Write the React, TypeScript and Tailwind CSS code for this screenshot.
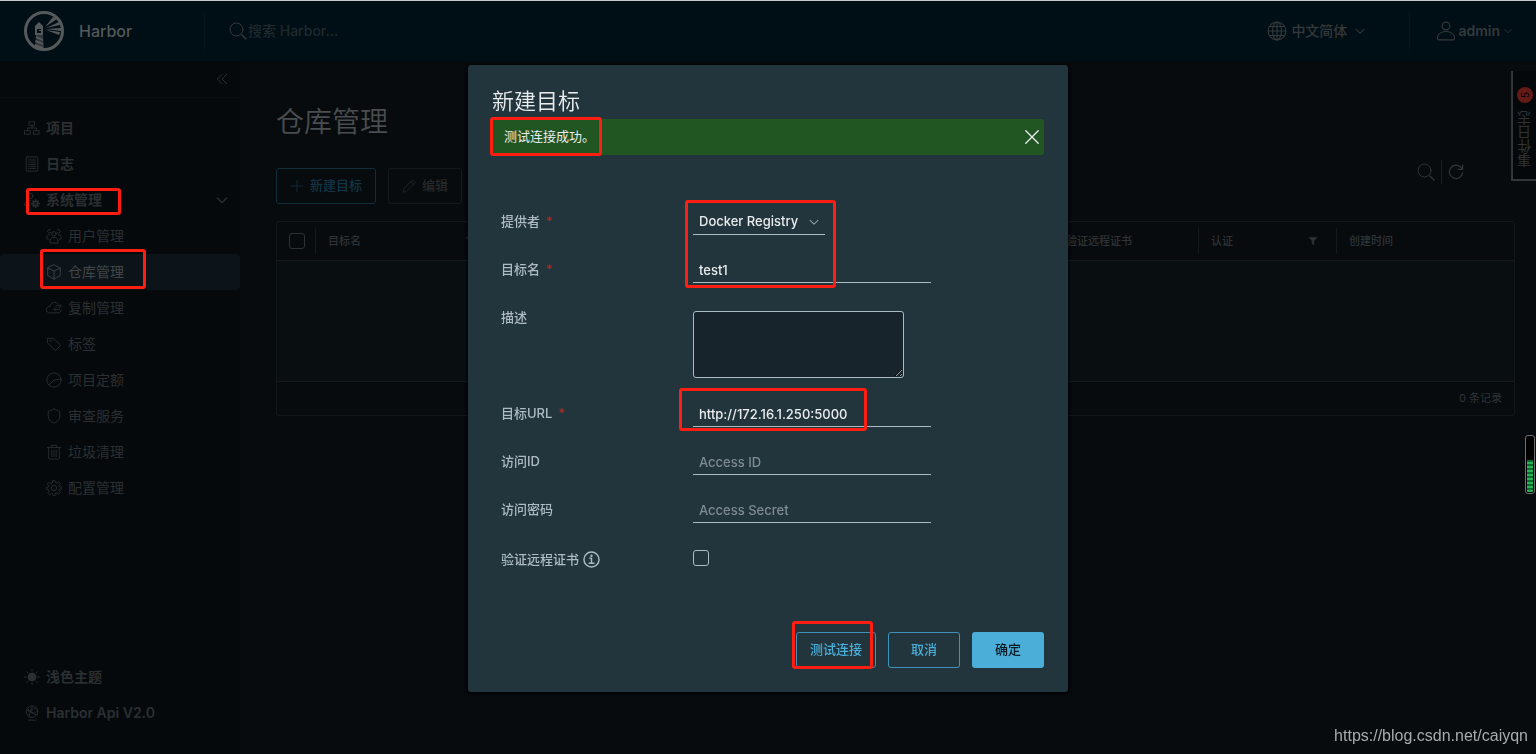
import React from "react";

type IconProps = { className?: string };

function Svg({ className, children }: IconProps & { children: React.ReactNode }) {
  return (
    <svg
      viewBox="0 0 36 36"
      className={className}
      fill="none"
      stroke="currentColor"
      strokeWidth={2}
      strokeLinecap="round"
      strokeLinejoin="round"
      aria-hidden="true"
    >
      {children}
    </svg>
  );
}

const OrganizationIcon = (p: IconProps) => (
  <Svg {...p}>
    <rect x="12" y="4" width="12" height="8" />
    <rect x="2" y="24" width="12" height="8" />
    <rect x="22" y="24" width="12" height="8" />
    <path d="M18 12v6M8 24v-6h20v6" />
  </Svg>
);
const LogIcon = (p: IconProps) => (
  <Svg {...p}>
    <rect x="5" y="2" width="26" height="32" rx="2" />
    <path d="M10 9h2M15 9h11M10 14h2M15 14h11M10 19h2M15 19h11M10 24h2M15 24h11M10 28h2M15 28h11" />
  </Svg>
);
const AdminIcon = (p: IconProps) => (
  <Svg {...p}>
    <circle cx="14" cy="9" r="6" />
    <path d="M14 19c-6 0-11 3-12 6v6h12" />
    <circle cx="26" cy="26" r="5" strokeWidth={4} />
    <path
      d="M26 17v3M26 32v3M17 26h3M32 26h3M20 20l2 2M30 30l2 2M20 32l2-2M30 22l2-2"
      strokeWidth={3}
    />
  </Svg>
);
const UsersIcon = (p: IconProps) => (
  <Svg {...p}>
    <circle cx="18" cy="13" r="5" />
    <path d="M9 33v-6c2-4 5-6 9-6s7 2 9 6v6z" />
    <path d="M11 10a4 4 0 1 1-1-6M25 10a4 4 0 1 0 1-6" />
    <path d="M8 15c-3 0-5 2-6 4v6h4M28 15c3 0 5 2 6 4v6h-4" />
  </Svg>
);
const BoxIcon = (p: IconProps) => (
  <Svg {...p}>
    <path d="M18 2 32 9v17l-14 8L4 26V9zM4 9l14 7 14-7M18 16v18" />
  </Svg>
);
const ReplicationIcon = (p: IconProps) => (
  <Svg {...p}>
    <path d="M26 8C23 4 17 4 13 7c-2 2-3 4-3 7-5 0-9 3-9 8 0 4 3 7 7 7h19c4 0 7-3 7-6" />
    <path d="M22 13h12M30 9l4 4-4 4M31 21H18M22 17l-4 4 4 4" />
  </Svg>
);
const TagIcon = (p: IconProps) => (
  <Svg {...p}>
    <path d="M4 5h13l16 16-12 12L4 16z" />
    <circle cx="10" cy="11" r="1" />
  </Svg>
);
const QuotaIcon = (p: IconProps) => (
  <Svg {...p}>
    <circle cx="18" cy="18" r="16" />
    <path d="M33 16 18 18 7 29" />
  </Svg>
);
const ShieldIcon = (p: IconProps) => (
  <Svg {...p}>
    <path d="M18 2c5 3 9 4 13 5v11c0 8-6 13-13 16C11 31 5 26 5 18V7c4-1 8-2 13-5z" />
  </Svg>
);
const TrashIcon = (p: IconProps) => (
  <Svg {...p}>
    <path d="M3 8h30M6 8v24c0 1 1 2 2 2h20c1 0 2-1 2-2V8M12 8V3h12v5M13 14v14M18 14v14M23 14v14" />
  </Svg>
);
const CogIcon = (p: IconProps) => (
  <Svg {...p}>
    <circle cx="18" cy="18" r="6" />
    <path d="m15 2-1 5-3 1-4-3-4 4 3 4-1 3-4 1v4l5 1 1 3-3 4 4 4 4-3 3 1 1 4h4l1-5 3-1 4 3 4-4-3-4 1-3 5-1v-4l-5-1-1-3 3-4-4-4-4 3-3-1-1-4z" />
  </Svg>
);
const SunIcon = (p: IconProps) => (
  <Svg {...p}>
    <circle cx="18" cy="18" r="9" fill="currentColor" />
    <path d="M18 1v4M18 31v4M1 18h4M31 18h4M6 6l3 3M27 27l3 3M6 30l3-3M27 9l3-3" />
  </Svg>
);
const ApiIcon = (p: IconProps) => (
  <Svg {...p}>
    <circle cx="18" cy="15" r="13" />
    <path d="M8 7c3 8 12 14 22 15M27 6c-8 2-14 9-16 19M6 12l8 2 5-11M14 14l9 5 6-6M10 34h17" />
  </Svg>
);
const SearchIcon = (p: IconProps) => (
  <Svg {...p}>
    <circle cx="15" cy="15" r="13" />
    <path d="m26 26 8 8" strokeWidth={3} />
  </Svg>
);
const GlobeIcon = (p: IconProps) => (
  <Svg {...p}>
    <circle cx="18" cy="18" r="16" />
    <ellipse cx="18" cy="18" rx="8" ry="16" />
    <path d="M18 2v32M2 18h32M5 10h26M5 26h26" />
  </Svg>
);
const UserIcon = (p: IconProps) => (
  <Svg {...p}>
    <circle cx="18" cy="9" r="7" />
    <path d="M3 33v-6c3-5 8-8 15-8s12 3 15 8v6c0 1-1 1-2 1H5c-1 0-2 0-2-1z" />
  </Svg>
);
const ChevronIcon = (p: IconProps) => (
  <Svg {...p}>
    <path d="m4 12 14 14 14-14" strokeWidth={4} />
  </Svg>
);
const CollapseIcon = (p: IconProps) => (
  <Svg {...p}>
    <path d="M18 4 4 18l14 14M32 4 18 18l14 14" strokeWidth={3} />
  </Svg>
);
const PlusIcon = (p: IconProps) => (
  <Svg {...p}>
    <path d="M18 3v30M3 18h30" />
  </Svg>
);
const PencilIcon = (p: IconProps) => (
  <Svg {...p}>
    <path d="M3 33l2-9L26 3c1-1 2-1 3 0l4 4c1 1 1 2 0 3L12 31zM22 7l7 7" />
  </Svg>
);
const RefreshIcon = (p: IconProps) => (
  <Svg {...p}>
    <path d="M31 10A15 15 0 1 0 33 20M33 2v10H23" strokeWidth={3} />
  </Svg>
);
const FilterIcon = (p: IconProps) => (
  <Svg {...p}>
    <path d="M4 5h28L21 18v14l-6-3V18z" fill="currentColor" />
  </Svg>
);
const CloseIcon = (p: IconProps) => (
  <Svg {...p}>
    <path d="m4 4 28 28M32 4 4 32" strokeWidth={3} />
  </Svg>
);
const InfoIcon = (p: IconProps) => (
  <Svg {...p}>
    <circle cx="18" cy="18" r="16" strokeWidth={3} />
    <circle cx="18" cy="10" r="1" strokeWidth={3} />
    <path d="M14 15h4v11M13 26h10" strokeWidth={3} />
  </Svg>
);

function HarborLogo({ className }: IconProps) {
  return (
    <svg viewBox="0 0 40 40" className={className} aria-hidden="true">
      <circle cx="20" cy="20" r="18.5" fill="none" stroke="currentColor" strokeWidth="3" />
      <g fill="currentColor">
        <path d="M11 15l4-4 4 4v2h-8z" />
        <path fillRule="evenodd" d="M11 16h8v8h-8zM13 18v4h4v-2h-2v-1h2v-1z" />
        <path d="M12 25l7 3v2l-7-3zM12 29l7 3v2l-8-3zM11 33l8 3v3l-8-3z" />
        <path d="M12 24h7v1l1 13-9-2z" fillOpacity="0.55" />
        <path d="M21 16 29 6l4 2zM22 17l13-6 1 3zM22 18l15-1v3zM22 19l14 2-1 3z" />
      </g>
    </svg>
  );
}

function Mark({ className }: { className: string }) {
  return (
    <span
      aria-hidden="true"
      className={`pointer-events-none absolute rounded-[3px] border-3 border-[#ff1e12] ${className}`}
    />
  );
}

const topNav = [
  { label: "项目", Icon: OrganizationIcon },
  { label: "日志", Icon: LogIcon },
];

const systemNav = [
  { label: "用户管理", Icon: UsersIcon },
  { label: "仓库管理", Icon: BoxIcon, active: true },
  { label: "复制管理", Icon: ReplicationIcon },
  { label: "标签", Icon: TagIcon },
  { label: "项目定额", Icon: QuotaIcon },
  { label: "审查服务", Icon: ShieldIcon },
  { label: "垃圾清理", Icon: TrashIcon },
  { label: "配置管理", Icon: CogIcon },
];

function Header() {
  return (
    <header className="flex h-[61px] shrink-0 items-center border-t border-[#c5c9cb] bg-[#000e15] text-[#34393c]">
      <a href="#home" className="flex h-10 w-[205px] items-center gap-[15px] border-r border-[#06151c] pl-6">
        <HarborLogo className="size-10 text-[#55595b]" />
        <span className="text-base font-medium text-[#55595b]">Harbor</span>
      </a>
      <label className="flex flex-1 items-center gap-px pl-6">
        <SearchIcon className="size-[18px]" />
        <input
          type="search"
          aria-label="搜索"
          placeholder="搜索 Harbor..."
          className="w-60 bg-transparent text-sm font-medium outline-none placeholder:text-[#20292e]"
        />
      </label>
      <button type="button" className="flex h-10 items-center border-r border-[#06151c] pr-11 text-sm font-medium">
        <GlobeIcon className="mr-1 size-5" />
        中文简体
        <ChevronIcon className="ml-2 size-[10px]" />
      </button>
      <button type="button" className="flex items-center pr-6 pl-[26px] text-sm font-semibold">
        <UserIcon className="mr-[2px] size-5" />
        admin
        <ChevronIcon className="ml-1 size-2" />
      </button>
    </header>
  );
}

function Sidebar() {
  return (
    <nav className="flex w-60 shrink-0 flex-col bg-[#05090c] pb-[23px] text-sm text-[#2b2f31]">
      <div className="mb-3 flex h-[37px] items-center justify-end border-b border-[#090d10] pr-3">
        <button type="button" aria-label="收起">
          <CollapseIcon className="size-3" />
        </button>
      </div>
      {topNav.map(({ label, Icon }) => (
        <a key={label} href="#nav" className="flex h-9 items-center gap-[6px] pl-6 font-bold">
          <Icon className="size-4" />
          {label}
        </a>
      ))}
      <button type="button" className="relative flex h-9 items-center gap-[6px] pr-3 pl-6 font-bold">
        <AdminIcon className="size-4" />
        系统管理
        <ChevronIcon className="ml-auto size-3" />
        <Mark className="top-[6px] left-[26px] h-[27px] w-[95px]" />
      </button>
      {systemNav.map(({ label, Icon, active }) => (
        <a
          key={label}
          href="#nav"
          className={
            active
              ? "relative flex h-9 items-center gap-[6px] rounded-[4px] bg-[#0c1319] pl-[46px] text-[#424648]"
              : "flex h-9 items-center gap-[6px] pl-[46px]"
          }
        >
          <Icon className="size-4" />
          {label}
          {active && <Mark className="-top-[5px] left-10 h-10 w-[106px]" />}
        </a>
      ))}
      <div className="mt-auto font-semibold">
        <button type="button" className="flex h-9 w-full items-center gap-[6px] pl-6 font-bold">
          <SunIcon className="size-4" />
          浅色主题
        </button>
        <a href="#api" className="flex h-9 items-center gap-[6px] pl-6">
          <ApiIcon className="size-4" />
          Harbor Api V2.0
        </a>
      </div>
    </nav>
  );
}

function HeadCell({ children, filter }: { children?: React.ReactNode; filter?: boolean }) {
  return (
    <th className="h-[38px] p-0 text-left font-medium">
      <div className="flex h-[26px] items-center justify-between border-l border-[#14191c] pr-[18px] pl-3 whitespace-nowrap">
        {children}
        {filter && <FilterIcon className="size-[10px]" />}
      </div>
    </th>
  );
}

function Main() {
  return (
    <main className="flex-1 bg-[#070b0e] pt-[41px] pr-[21px] pl-9 text-[#2f3335]">
      <h1 className="text-[28px] leading-10 font-[350] text-[#4a4d4f]">仓库管理</h1>
      <div className="mt-[26px] flex items-start gap-3 text-[13px]">
        <button
          type="button"
          className="flex h-9 items-center gap-[6px] rounded-[3px] border border-[#0f2d3a] px-[13px] font-medium text-[#123546]"
        >
          <PlusIcon className="size-[14px]" />
          新建目标
        </button>
        <button
          type="button"
          className="flex h-9 items-center gap-[6px] rounded-[3px] border border-[#15191c] px-[13px] font-medium text-[#25292b]"
        >
          <PencilIcon className="size-[14px]" />
          编辑
        </button>
        <div className="-mt-2 mr-[51px] ml-auto flex items-center gap-[6px]">
          <button type="button" aria-label="搜索">
            <SearchIcon className="size-[18px]" />
          </button>
          <span className="h-6 w-px bg-[#1b2023]" />
          <button type="button" aria-label="刷新">
            <RefreshIcon className="size-4" />
          </button>
        </div>
      </div>
      <div className="mt-[17px] rounded-[3px] border border-[#11171a] text-[11px]">
        <table className="w-full table-fixed border-collapse">
          <colgroup>
            <col className="w-[38px]" />
            <col className="w-[178px]" />
            <col />
            <col className="w-[145px]" />
            <col className="w-[138px]" />
            <col className="w-[178px]" />
          </colgroup>
          <thead>
            <tr className="border-b border-[#14191c]">
              <th className="p-0 pl-3 text-left">
                <input
                  type="checkbox"
                  aria-label="全选"
                  className="block size-4 appearance-none rounded-[3px] border border-[#2d3235]"
                />
              </th>
              <HeadCell filter>目标名</HeadCell>
              <HeadCell />
              <HeadCell>验证远程证书</HeadCell>
              <HeadCell filter>认证</HeadCell>
              <HeadCell>创建时间</HeadCell>
            </tr>
          </thead>
          <tbody>
            <tr className="border-b border-[#14191c]">
              <td colSpan={6} className="h-[121px] bg-[#090e11]" />
            </tr>
          </tbody>
        </table>
        <div className="flex h-[33px] items-center justify-end pr-3">0 条记录</div>
      </div>
    </main>
  );
}

function Row({
  id,
  label,
  required,
  info,
  tall,
  children,
}: {
  id: string;
  label: string;
  required?: boolean;
  info?: boolean;
  tall?: boolean;
  children: React.ReactNode;
}) {
  return (
    <div className={tall ? "flex h-24" : "flex h-12"}>
      <label
        htmlFor={id}
        className={
          info
            ? "flex h-12 w-48 items-center pt-1 font-medium text-[#adbbc4]"
            : "flex h-12 w-48 items-center font-medium text-[#adbbc4]"
        }
      >
        {label}
        {required && <span className="ml-[6px] text-[#b32b1c]">*</span>}
        {info && <InfoIcon className="ml-1 size-[17px]" />}
      </label>
      <div className="flex flex-1 items-center">{children}</div>
    </div>
  );
}

const lineField =
  "h-[26px] w-[238px] border-b border-[#acbac3] bg-transparent px-[6px] pt-[2px] font-medium text-[#e9ecef] outline-none placeholder:text-[#7f8c93]";

function TargetDialog() {
  return (
    <div className="fixed inset-0 flex items-center justify-center pt-[2px]">
      <div
        role="dialog"
        aria-modal="true"
        aria-labelledby="dialog-title"
        className="w-[600px] max-w-full rounded-[3px] bg-[#22343c] p-6 text-[13px] shadow-[0_1px_2px_2px_rgba(0,0,0,0.5)]"
      >
        <h2 id="dialog-title" className="text-[22px] leading-6 font-[350] text-[#e9ecef]">
          新建目标
        </h2>
        <div
          role="status"
          className="relative mt-[6px] flex h-9 items-center justify-between rounded-[3px] bg-[#215623] pr-1 pl-3 text-[#e9ecef]"
        >
          测试连接成功。
          <button type="button" aria-label="关闭">
            <CloseIcon className="size-4" />
          </button>
          <Mark className="-top-[2px] -left-[2px] h-[39px] w-28" />
        </div>

        <form className="mt-[43px] pl-[9px]">
          <div className="relative">
            <Row id="provider" label="提供者" required>
              <div className="relative">
                <select
                  id="provider"
                  className="block h-[26px] w-[132px] appearance-none border-b border-[#acbac3] bg-transparent px-[6px] pt-[2px] font-medium text-[#e9ecef] outline-none"
                >
                  <option>Docker Registry</option>
                </select>
                <ChevronIcon className="pointer-events-none absolute top-2 right-[6px] size-[10px] text-[#8d9aa1]" />
              </div>
            </Row>
            <Row id="name" label="目标名" required>
              <input id="name" type="text" defaultValue="test1" className={lineField} />
            </Row>
            <Mark className="top-[2px] left-[184px] h-[88px] w-[151px]" />
          </div>
          <Row id="description" label="描述" tall>
            <textarea
              id="description"
              className="mt-[6px] h-[67px] w-[211px] rounded-[3px] border border-[#acbac3] bg-[#17242b] p-[6px] text-[#e9ecef] outline-none"
            />
          </Row>
          <div className="relative">
            <Row id="url" label="目标URL" required>
              <input id="url" type="text" defaultValue="http://172.16.1.250:5000" className={lineField} />
            </Row>
            <Mark className="-top-[2px] left-[178px] h-[43px] w-[188px]" />
          </div>
          <Row id="access-id" label="访问ID">
            <input id="access-id" type="text" placeholder="Access ID" className={lineField} />
          </Row>
          <Row id="access-secret" label="访问密码">
            <input id="access-secret" type="password" placeholder="Access Secret" className={lineField} />
          </Row>
          <Row id="verify" label="验证远程证书" info>
            <input
              id="verify"
              type="checkbox"
              className="size-4 appearance-none rounded-[3px] border border-[#acbac3]"
            />
          </Row>
        </form>

        <div className="mt-[50px] flex justify-end gap-3 font-medium">
          <button
            type="button"
            className="relative h-9 w-20 rounded-[3px] border border-[#3f93b8] text-[#4aaed9]"
          >
            测试连接
            <Mark className="-top-3 -left-[5px] h-12 w-[81px]" />
          </button>
          <button type="button" className="h-9 w-[72px] rounded-[3px] border border-[#3f93b8] text-[#4aaed9]">
            取消
          </button>
          <button type="button" className="h-9 w-[72px] rounded-[3px] bg-[#4aaed9] text-[#0a1a22]">
            确定
          </button>
        </div>
      </div>
    </div>
  );
}

export default function App() {
  return (
    <div className="relative flex min-h-screen flex-col overflow-hidden bg-[#070b0e] font-['Inter','Noto_Sans_CJK_SC',sans-serif]">
      <Header />
      <div className="flex flex-1">
        <Sidebar />
        <Main />
      </div>

      <button
        type="button"
        className="absolute top-[71px] right-0 flex h-[110px] w-[25px] flex-col items-center justify-between border-b-2 border-l-2 border-[#333638] bg-[#05080a] pt-4 pb-3 text-sm text-[#303436]"
      >
        <span className="flex size-4 -rotate-90 items-center justify-center rounded-full bg-[#641b16] text-[10px] text-black">
          5
        </span>
        <span className="rotate-180 leading-4 [writing-mode:vertical-rl]">事件日志</span>
      </button>

      <TargetDialog />

      <div
        aria-hidden="true"
        className="fixed top-[435px] right-px flex h-[59px] w-[10px] flex-col justify-end rounded-[3px] border border-[#6d7072] bg-black p-px"
      >
        <div className="h-8 rounded-b-[1px] bg-[repeating-linear-gradient(#0f6b2d_0_2px,#27b457_2px_4px)]" />
      </div>

      <a
        href="https://blog.csdn.net/caiyqn"
        className="fixed right-2 bottom-2 font-['Liberation_Sans',sans-serif] text-base leading-5 text-[#a8abad]"
      >
        https://blog.csdn.net/caiyqn
      </a>
    </div>
  );
}
